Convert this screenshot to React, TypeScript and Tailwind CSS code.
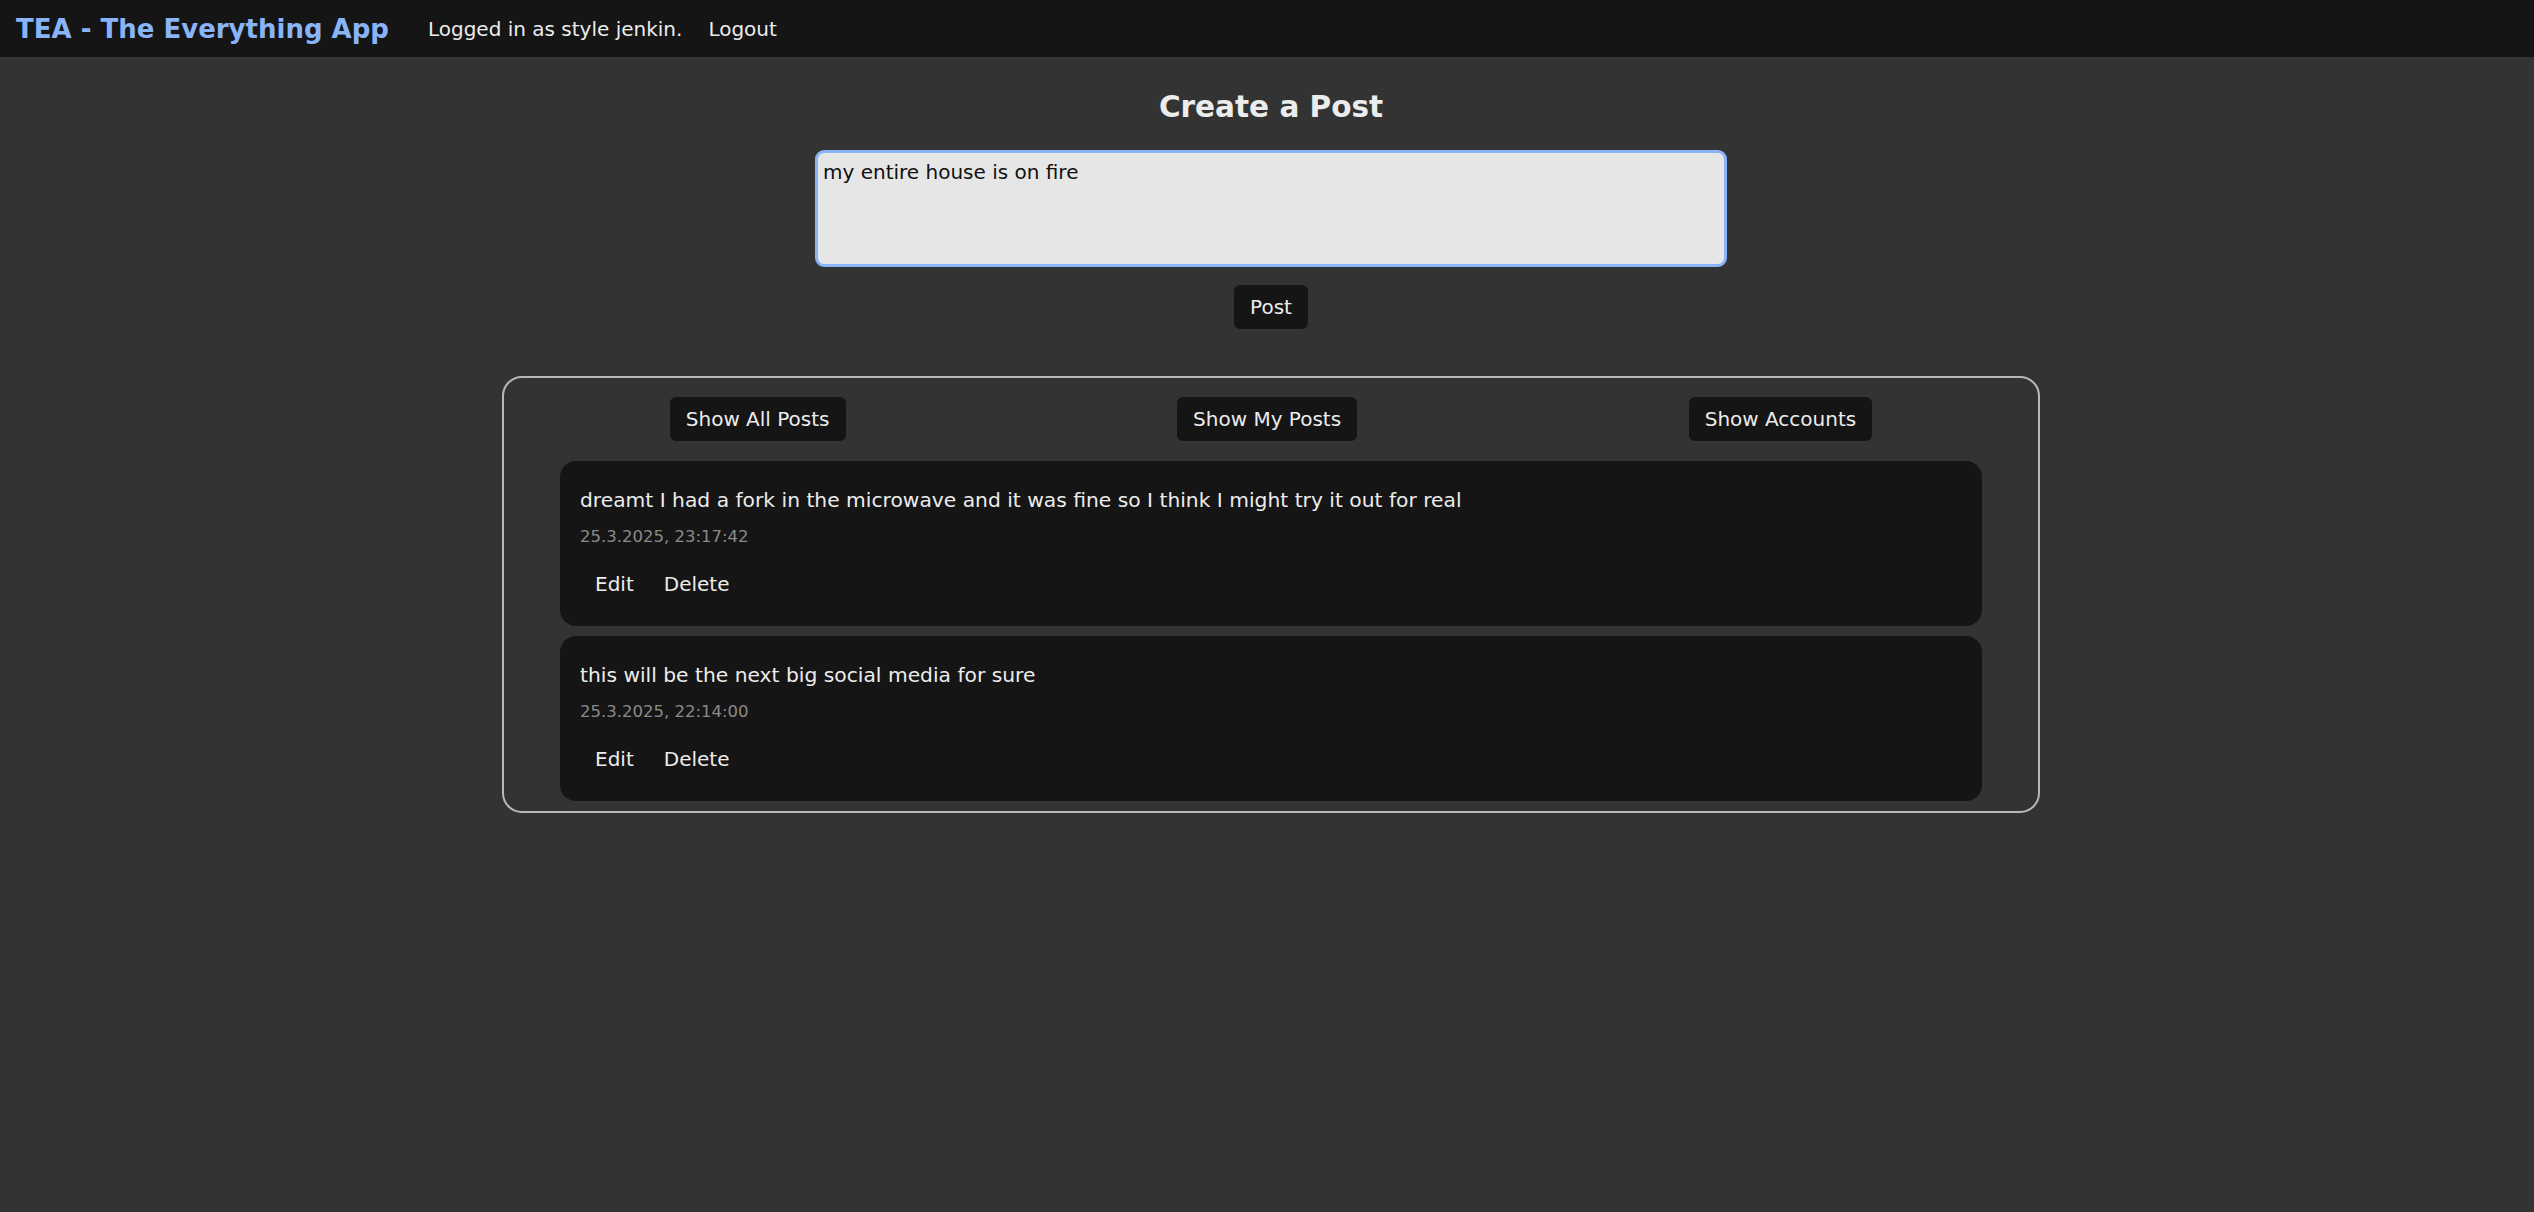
import React from "react";

const font = { fontFamily: "'DejaVu Sans', 'Liberation Sans', sans-serif" };

function PostCard({ text, date }: { text: string; date: string }) {
  return (
    <div className="rounded-[16px] bg-[#151515] px-5 pt-[27px] pb-[20px]">
      <p className="text-[20.25px] leading-6 text-[#ececec]">{text}</p>
      <p className="mt-[15px] text-[16.5px] leading-5 text-[#8a8a8a]">{date}</p>
      <div className="mt-[15px] flex">
        <button className="h-[44px] rounded-[6px] bg-[#151515] px-[15px] text-[20px] text-[#ececec]">Edit</button>
        <button className="h-[44px] rounded-[6px] bg-[#151515] px-[15px] text-[20px] text-[#ececec]">Delete</button>
      </div>
    </div>
  );
}

export default function App() {
  return (
    <div className="min-h-[1212px] bg-[#333333] text-[#ececec]" style={font}>
      <header className="flex h-[57px] items-center bg-[#151515] px-4">
        <span className="text-[26px] font-bold leading-8 text-[#8ab4f8]">TEA - The Everything App</span>
        <span className="ml-[39px] text-[20px] text-[#ececec]">Logged in as style jenkin.</span>
        <button className="ml-[26px] text-[20px] text-[#ececec]">Logout</button>
      </header>
      <main className="flex flex-col items-center pl-2">
        <h2 className="mt-[28px] text-[29.5px] font-bold leading-[44px] text-[#ececec]">Create a Post</h2>
        <textarea
          className="mt-[21px] h-[117px] w-[912px] resize-none rounded-[9px] border-[3px] border-[#8ab4f8] bg-[#e6e6e6] px-[5px] pt-[7px] pb-[4px] text-[20px] leading-6 text-[#111] outline-none"
          style={font}
          defaultValue="my entire house is on fire"
        />
        <button className="mt-[18px] h-[44px] rounded-[6px] bg-[#151515] px-[16px] text-[20px] text-[#ececec]">Post</button>
        <section className="mt-[47px] w-[1538px] rounded-[20px] border-2 border-[#b8b8b8] pt-[19px] pb-[10px]">
          <div className="flex justify-around">
            <button className="h-[44px] rounded-[6px] bg-[#151515] px-[16px] text-[20px] text-[#ececec]">Show All Posts</button>
            <button className="h-[44px] rounded-[6px] bg-[#151515] px-[16px] text-[20px] text-[#ececec]">Show My Posts</button>
            <button className="h-[44px] rounded-[6px] bg-[#151515] px-[16px] text-[20px] text-[#ececec]">Show Accounts</button>
          </div>
          <div className="mt-[20px] flex flex-col gap-[10px] px-[56px]">
            <PostCard
              text="dreamt I had a fork in the microwave and it was fine so I think I might try it out for real"
              date="25.3.2025, 23:17:42"
            />
            <PostCard text="this will be the next big social media for sure" date="25.3.2025, 22:14:00" />
          </div>
        </section>
      </main>
    </div>
  );
}
